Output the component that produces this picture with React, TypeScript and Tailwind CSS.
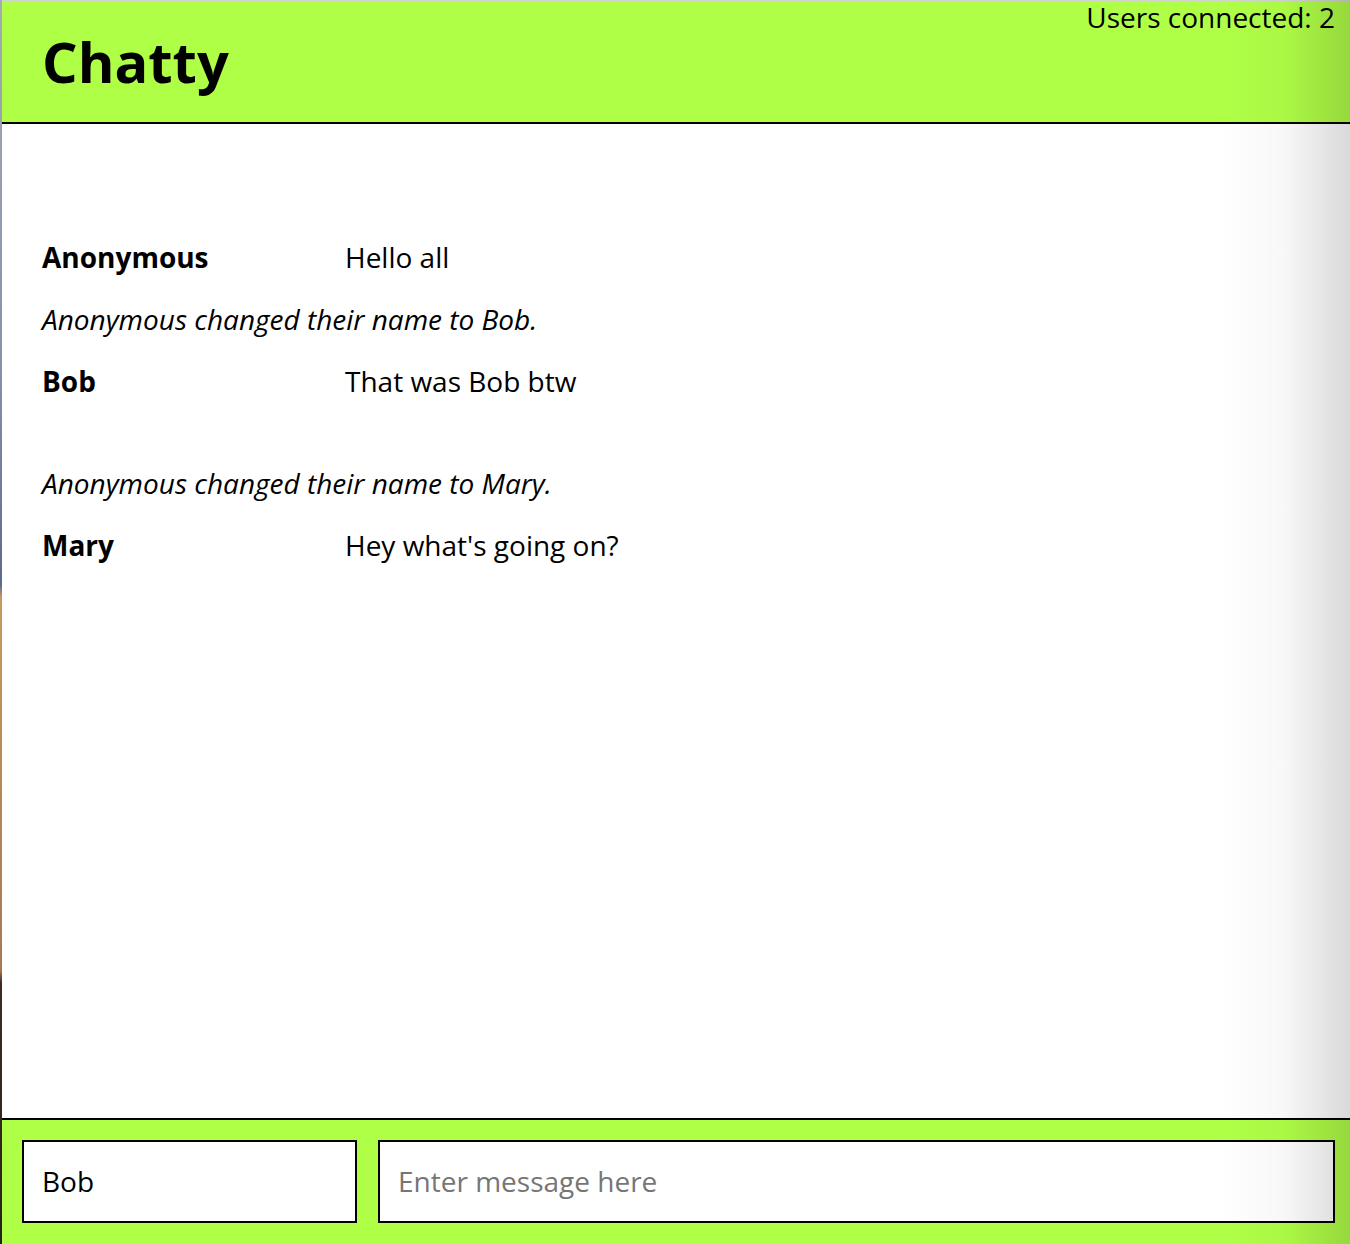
const messages = [
  { id: 1, type: 'message', user: 'Anonymous', text: 'Hello all' },
  { id: 2, type: 'notification', text: 'Anonymous changed their name to Bob.' },
  { id: 3, type: 'message', user: 'Bob', text: 'That was Bob btw', extraGap: true },
  { id: 4, type: 'notification', text: 'Anonymous changed their name to Mary.' },
  { id: 5, type: 'message', user: 'Mary', text: "Hey what's going on?" },
];

function Message({ m }: { m: (typeof messages)[number] }) {
  if (m.type === 'notification') {
    return <div className="italic leading-[38px]">{m.text}</div>;
  }
  return (
    <div className={'flex leading-[38px]' + (m.extraGap ? ' mb-[40px]' : '')}>
      <span className="w-[303px] shrink-0 font-bold">{m.user}</span>
      <span>{m.text}</span>
    </div>
  );
}

export default function App() {
  return (
    <div className="relative flex h-[1244px] overflow-hidden bg-white font-['Open_Sans',sans-serif] text-[28px] text-black">
      <div className="w-[2px] shrink-0 bg-[linear-gradient(to_bottom,#a7aab5_0%,#8790a8_30%,#5d6a8e_47%,#c49a62_48%,#a87850_78%,#3b2d25_79%,#2a201b_100%)]" />
      <div className="flex flex-1 flex-col border-t border-[#d4d4d4]">
        <header className="flex h-[123px] shrink-0 items-start justify-between border-b-2 border-black bg-[#b0ff47] pl-[40px] pr-[15px]">
          <h1 className="mt-[22px] text-[56px] font-bold leading-[76px]">Chatty</h1>
          <span className="leading-[32px]">Users connected: 2</span>
        </header>

        <main className="flex flex-1 flex-col gap-[24px] px-[40px] pt-[114px]">
          {messages.map((m) => (
            <Message key={m.id} m={m} />
          ))}
        </main>

        <footer className="flex h-[126px] shrink-0 gap-[21px] border-t-2 border-black bg-[#b0ff47] pb-[21px] pl-[20px] pr-[15px] pt-[20px]">
          <input
            defaultValue="Bob"
            className="w-[335px] border-2 border-black bg-white px-[18px] pb-[2px] font-['Open_Sans',sans-serif] text-[28px] text-black outline-none"
          />
          <input
            placeholder="Enter message here"
            className="flex-1 border-2 border-black bg-white px-[18px] pb-[2px] font-['Open_Sans',sans-serif] text-[28px] text-black outline-none placeholder:text-[#767676]"
          />
        </footer>
      </div>
      <div className="pointer-events-none absolute inset-y-0 right-0 w-[130px] bg-gradient-to-r from-transparent via-black/[0.03] to-black/15" />
    </div>
  );
}
